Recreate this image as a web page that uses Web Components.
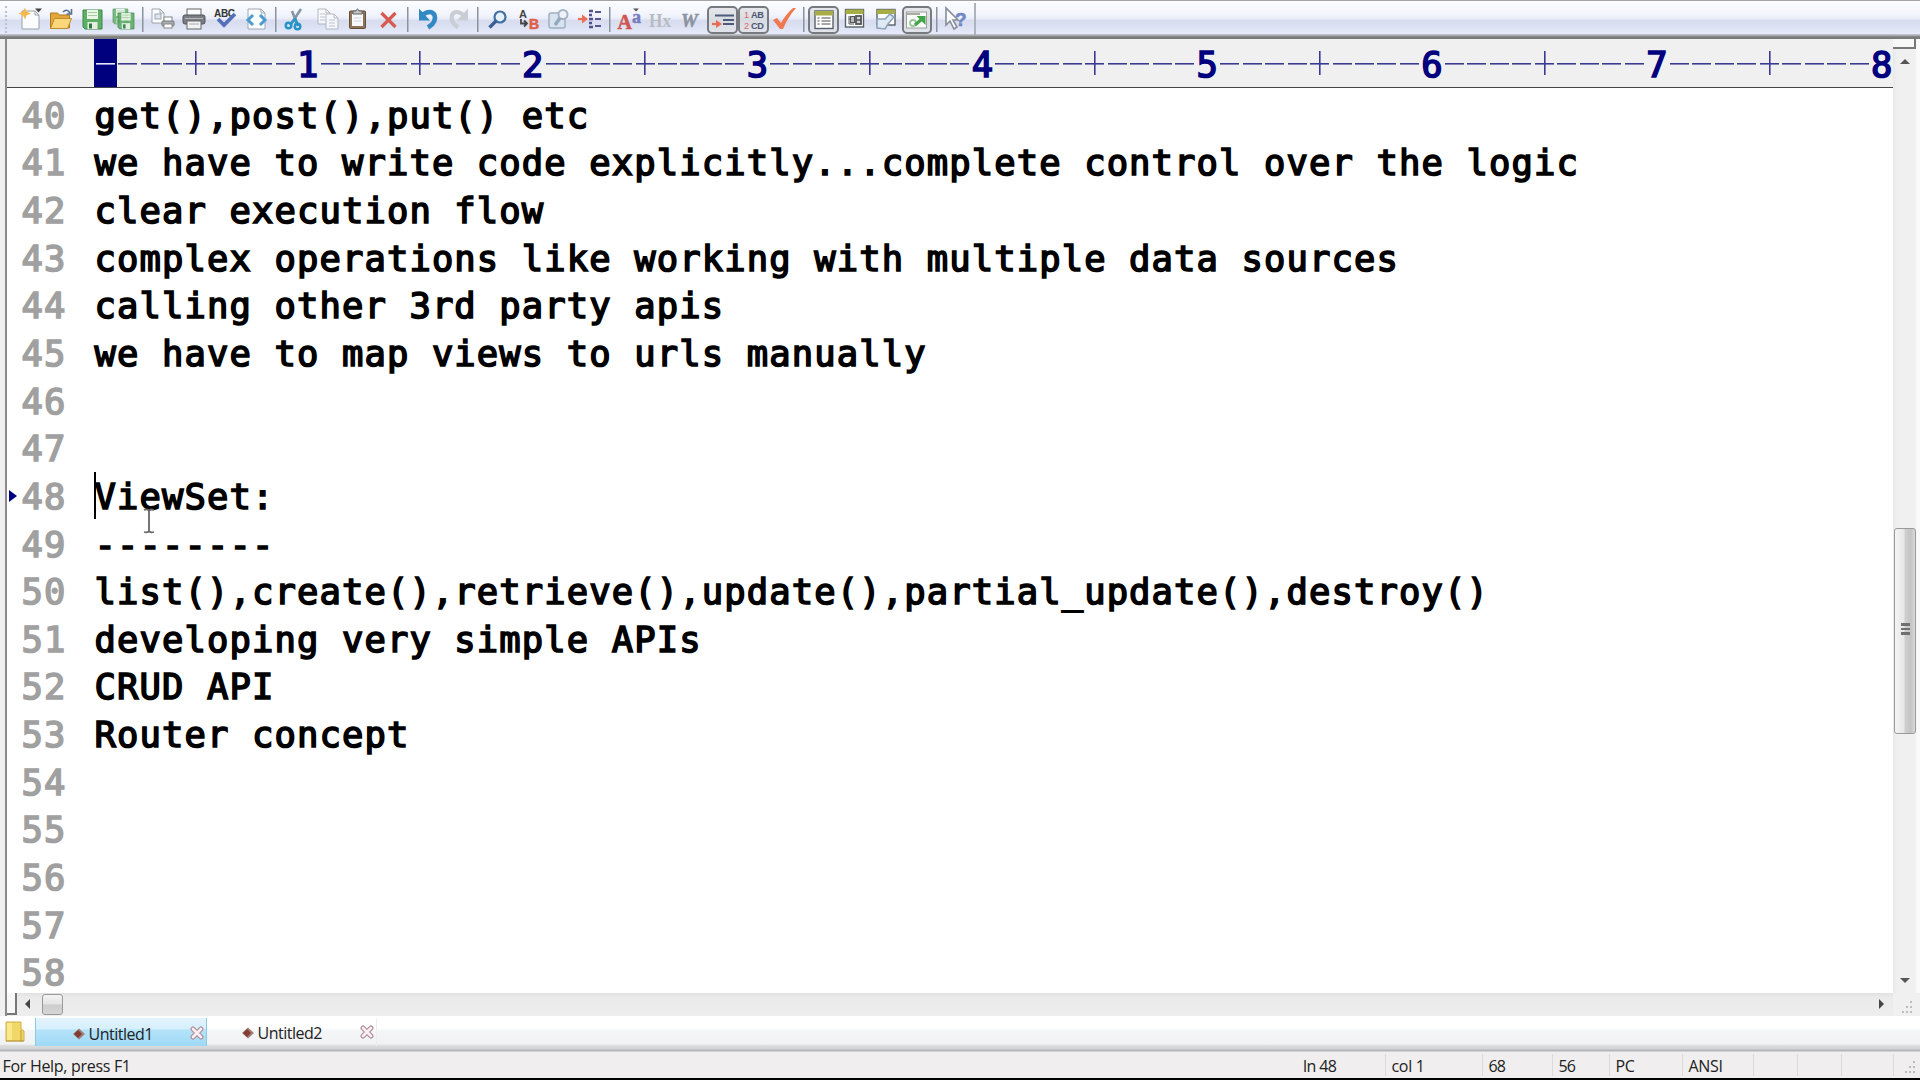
<!DOCTYPE html>
<html lang="en">
<head>
<meta charset="utf-8">
<title>Untitled1</title>
<style>
html,body{margin:0;height:100%;overflow:hidden;background:#f0f0f0}
</style>
</head>
<body>
<edit-app></edit-app>
<script>
const define = (name, html, setup) => customElements.define(name, class extends HTMLElement {
  constructor() {
    super();
    const t = document.createElement('template');
    t.innerHTML = typeof html === 'function' ? html(this) : html;
    this.attachShadow({mode: 'open'}).append(t.content.cloneNode(true));
    if (setup) setup(this);
  }
});

const page = (x, y, w = 14, h = 17, s = '#8a8f98') => `<path d="M${x} ${y}h${w - 4}l4 4v${h - 4}h-${w}z" fill="#fbfcfe" stroke="${s}"/><path d="M${x + w - 4} ${y}v4h4" fill="none" stroke="${s}"/>`;
const win = (x, y, w, h) => `<rect x="${x}" y="${y}" width="${w}" height="${h}" fill="#fff" stroke="#56606c" stroke-width="1.400"/><rect x="${x}" y="${y}" width="${w}" height="4.5" fill="#a9ad45"/>`;
const floppy = (x, y, s) => `<g transform="translate(${x} ${y}) scale(${s})"><path d="M0 0h19v19H2l-2-2z" fill="#5fae66" stroke="#3b8747"/><rect x="4" y="0" width="11" height="9" fill="#e9f6e6"/><path d="M5 2.500h9M5 5.500h9" stroke="#a7c9a4"/><rect x="4.500" y="12" width="10" height="7" fill="#e4efe2"/><rect x="6" y="13.500" width="3" height="5" fill="#2f7a3c"/></g>`;
const ICONS = {
  new: page(7, 6, 17, 18, '#9aa0a8') + '<path d="M20 3.500h7l-3.500 4z" fill="#444"/><path d="M10 2.500l1.500 4 4.500 2-4.500 2-1.500 4-2-4-4.500-2 4.500-2z" fill="#f8b84a"/>',
  open: '<path d="M4.500 23V8h7l2 2h10v13z" fill="#e2a63a" stroke="#b07a25"/><path d="M4.500 23.500l4-10h17l-4 10z" fill="#fbd77a" stroke="#c08c30"/><path d="M17 7q4-4 7 1M25.500 4v5h-5" fill="none" stroke="#55708e" stroke-width="1.600"/>',
  save: floppy(6, 5, 1),
  saveall: '<g opacity=".8">' + floppy(5, 4, .78) + '</g>' + '<g opacity=".9">' + floppy(10, 8, .84) + '</g>',
  preview: page(5, 4, 12, 14, '#a0a4ab') + '<rect x="8" y="9" width="6" height="5" fill="#dfe5ec" stroke="#9aa6b4"/><rect x="17" y="12" width="8" height="5" fill="#fff" stroke="#888"/><rect x="15" y="16" width="12" height="5" rx="1" fill="#a9adb4" stroke="#777"/><rect x="17" y="19" width="8" height="4" fill="#fff" stroke="#888"/>',
  print: '<rect x="9" y="4" width="14" height="8" fill="#fafafa" stroke="#666"/><rect x="5" y="10" width="22" height="9" rx="2" fill="#7a7e83" stroke="#505357"/><path d="M7 13.500h18" stroke="#b5b9be"/><rect x="9" y="16" width="14" height="8" fill="#f2f3f5" stroke="#666"/><path d="M11 19h10" stroke="#aaa"/>',
  spell: '<text x="4" y="11.500" font-family="Liberation Sans" font-weight="700" font-size="10" textLength="21" fill="#333">ABC</text><path d="M8 14l6 6L25 9" fill="none" stroke="#5470b8" stroke-width="3.800"/>',
  html: page(7, 4, 17, 20, '#a0a6b0') + '<path d="M12 10l-5 5 5 5M19 10l5 5-5 5" fill="none" stroke="#4a9bd0" stroke-width="3"/>',
  cut: '<path d="M22 4L12 19M13 6l5 13" stroke="#8496a6" stroke-width="2.600"/><path d="M16 14l-5 6M16 13l3 8" stroke="#2f97c9" stroke-width="2.600"/><circle cx="9.500" cy="20.500" r="2.800" fill="none" stroke="#2593c8" stroke-width="2.400"/><circle cx="18.500" cy="21.500" r="2.800" fill="none" stroke="#2593c8" stroke-width="2.400"/>',
  copy: '<g opacity=".8">' + page(7, 4, 12, 15, '#a6abb3') + page(15, 9, 12, 15, '#a6abb3') + '<path d="M9 9h5M9 12h5M9 15h5M18 15h6M18 18h6M18 21h6" stroke="#b5bbc4"/></g>',
  paste: '<rect x="7.500" y="6" width="16" height="17.500" rx="1" fill="#8d7358" stroke="#624d38"/><rect x="10" y="9" width="11" height="12" fill="#f7f8fa"/><path d="M11 9V6h3q1.500-4 3 0h3v3z" fill="#c1c4c7" stroke="#666"/><path d="M12 13h7M12 16h7" stroke="#d0d5dc"/>',
  del: '<path d="M8.500 8l14 14M22.500 8l-14 14" stroke="#d65a52" stroke-width="3.200"/>',
  undo: '<path d="M10 10q9-6 12.500 0 2.500 7-6.500 12.500" fill="none" stroke="#3089c3" stroke-width="4.600"/><path d="M7 3.500v12h11z" fill="#3089c3"/>',
  redo: '<path d="M21 10q-9-6-12 0-2 7 6 12.500" fill="none" stroke="#c9cdd4" stroke-width="4.200"/><path d="M25 3.500v12H14z" fill="#c9cdd4"/>',
  find: '<circle cx="18" cy="12" r="5.500" fill="#e5f0fb" stroke="#3f6fa5" stroke-width="2.200"/><path d="M14 16l-6.500 6.500" stroke="#3a5f92" stroke-width="3.400"/>',
  replace: '<text x="6" y="12.500" font-family="Liberation Sans" font-weight="700" font-size="11" fill="#444">A</text><text x="16" y="24" font-family="Liberation Sans" font-weight="700" font-size="14" fill="#e0604c" stroke="#e0604c" stroke-width=".6">B</text><path d="M8 14v4.500h5M11 15.500l3 3-3 3" fill="none" stroke="#444" stroke-width="1.800"/>',
  findfiles: '<rect x="5" y="8" width="16" height="15" rx="2" fill="#d8e3ee" stroke="#9db0c4" stroke-width="1.500"/><circle cx="19" cy="9.500" r="4.500" fill="#edf3f8" stroke="#a5b5c6" stroke-width="2"/><path d="M16 13l-5 7" stroke="#91a8bf" stroke-width="3.400"/>',
  goto: '<path d="M3 14h6" stroke="#ec6d56" stroke-width="2.200"/><path d="M7 9.500l6 4.500-6 4.500z" fill="#ec6d56"/><path d="M14 6h4M14 10h3M14 14h4M14 18h3M14 22h4" stroke="#4e538e" stroke-width="2.600"/><path d="M20 7h6M20 14h6M20 21h6" stroke="#535991" stroke-width="2"/>',
  font: '<text x="3.500" y="23.500" font-family="Liberation Serif" font-weight="700" font-size="20" fill="#cf5550" stroke="#cf5550" stroke-width=".5">A</text><text x="18" y="17.500" font-family="Liberation Serif" font-weight="700" font-size="18" fill="#777cc0" stroke="#777cc0" stroke-width=".5">a</text><path d="M19 3.500h6l-3 3z" fill="#555"/>',
  hx: '<text x="4" y="21.500" font-family="Liberation Serif" font-weight="700" font-size="18" textLength="22" lengthAdjust="spacingAndGlyphs" fill="#b8bcc2">Hx</text>',
  w: '<text x="5" y="21.500" font-family="Liberation Serif" font-style="italic" font-weight="700" font-size="19" fill="#8b93a0" stroke="#8b93a0" stroke-width=".5">W</text>',
  indent: '<path d="M8 10.500h19M16 15h11M16 19h11" stroke="#4c5a7c" stroke-width="2"/><path d="M5 19h5" stroke="#ea6b4f" stroke-width="2.200"/><path d="M9 15l6 4-6 4z" fill="#ea6b4f"/>',
  linenum: '<g font-family="Liberation Sans" font-size="9.2"><text x="6" y="13.300" fill="#db6a6a">1</text><text x="6" y="24" fill="#db6a6a">2</text><text x="13" y="13.300" font-weight="700" textLength="13" fill="#4b5673">AB</text><text x="13" y="24" font-weight="700" textLength="13" fill="#4b5673">CD</text></g>',
  check: '<path d="M4 15l4-2 4 5Q17 9 24 3l3 0q-8 9-13 21h-3z" fill="#f0784e"/>',
  list: win(7, 6, 18, 17.500) + '<path d="M9.500 13h2M9.500 16h2M9.500 19h2M13.500 13h9M13.500 16h9M13.500 19h9" stroke="#888" stroke-width="1.300"/>',
  tree: win(6.5, 4.500, 18, 17.500) + '<path d="M10 11v8h5M10 14h4" fill="none" stroke="#555"/><rect x="11.500" y="11.500" width="4" height="6" fill="#b7bcc4" stroke="#555"/><rect x="17" y="11" width="5" height="8" fill="#d0d4da" stroke="#555" stroke-width="1.800"/><path d="M17 15h5" stroke="#555" stroke-width="1.500"/>',
  browser: win(7, 4.500, 18, 15.500) + '<path d="M7 14h8l5-5 4 3-6 7-3 5-8-1z" fill="#dfe9f3" stroke="#8da3ba" stroke-width="1.600"/>',
  external: '<rect x="5.500" y="7" width="20" height="16" fill="#fafbfa" stroke="#9a9f9c"/><path d="M6 9h13" stroke="#a7ad9f" stroke-width="2"/><circle cx="12" cy="18" r="3" fill="#fff" stroke="#9bc59b" stroke-width="1.800"/><path d="M14 20l7-6" stroke="#42a548" stroke-width="3.200"/><path d="M15.500 11h9v9z" fill="#42a548"/>',
  help: '<path d="M6 3v17l4-4 4 8 3-2-4-7h5z" fill="#fbfcfe" stroke="#888e98" stroke-width="1.600"/><text x="15" y="21" font-family="Liberation Sans" font-weight="700" font-size="19" fill="#6f88c2" stroke="#6f88c2" stroke-width=".6">?</text>'
};

define('tool-icon', el => `<style>
:host{display:flex;flex:none;width:31.1px;height:30px;align-items:center;justify-content:center;position:relative}
:host([on])::before{content:"";position:absolute;inset:.5px .3px 1.500px;border:2px solid #777a7f;border-radius:5px;background:linear-gradient(#e6e7eb,#d9dbe2 50%,#e2e4ec);box-sizing:border-box}
svg{width:31px;height:30px;position:relative}
</style><svg viewBox="0 0 31 30">${ICONS[el.getAttribute('name')]}</svg>`);

const T = list => list.split(' ').map(n => n === '|' ? '<i></i>' : n[0] === '+' ? `<tool-icon on name="${n.slice(1)}"></tool-icon>` : `<tool-icon name="${n}"></tool-icon>`).join('');
define('tool-bar', `<style>
:host{display:flex;box-sizing:border-box;height:38.500px;border-top:1px solid #a3a3a8;padding:4px 0 0 15.1px;
background:linear-gradient(#fdfdff 0,#f2f4fc 14px,#e8ecf9 18px,#d8dcee 19px,#dbe1f2 25px,#e7ebfb 33px,#bfc1c8 33.500px,#a9abad 34.500px,#868887 35.500px,#777 37px);position:relative}
:host::before{content:"";position:absolute;left:5px;top:5px;height:27px;border-left:2px dotted #b9bfce}
i{flex:none;width:7.8px;height:27px;background:linear-gradient(#8d929d,#8d929d) 3px 2px/1.500px 25px no-repeat}
b{width:1.500px;height:32px;margin:-2px 0 0 3px;background:#aeb2bd}
</style>${T('new open save saveall | preview print spell html | cut copy paste del | undo redo | find replace findfiles goto | font hx w +indent +linenum check | +list tree browser +external | help')}<b></b>`);

const MONO = 'font-family:"DejaVu Sans Mono","Liberation Mono",monospace;font-size:35.5px;letter-spacing:1.119px;-webkit-text-stroke:1.600px currentColor;';
const cells = [...Array(80)].map((_, i) => {
  const k = i + 1;
  return k % 10 === 0 ? `<span class="n">${k / 10}</span>` : `<span class="${k === 1 ? 'cur' : k % 5 === 0 ? 't' : ''}"></span>`;
}).join('');
define('column-ruler', `<style>
:host{display:flex;box-sizing:border-box;height:49.500px;padding-left:87.2px;background:#f0f0f0;border-bottom:1.500px solid #444;color:#00007f;overflow:hidden}
span{flex:none;width:22.49px;height:48.500px;background:linear-gradient(#3a3a94,#3a3a94) 1.700px 24.500px/19px 1.600px no-repeat;box-sizing:border-box}
.t{background:linear-gradient(#3a3a94,#3a3a94) 1.700px 24.500px/19px 1.600px no-repeat,linear-gradient(#3a3a94,#3a3a94) 10.500px 12px/1.600px 24px no-repeat}
.cur{background:linear-gradient(#e8e8ff,#e8e8ff) 1.700px 24.500px/19px 1.600px no-repeat,#00007f}
.n{background:none;${MONO}letter-spacing:0;line-height:51.500px;text-align:center;display:flex;justify-content:center}
</style>${cells}`);

define('code-line', el => `<style>
:host{display:flex;flex:none;height:47.67px;line-height:47.67px;white-space:pre;${MONO}color:#000;position:relative}
.g{width:67px;flex:none;color:#a0a0a0;padding-left:14.5px;box-sizing:border-box;margin-right:20.5px}
.m{position:absolute;left:2px;top:17px;border-left:8px solid #00007f;border-top:6.500px solid transparent;border-bottom:6.500px solid transparent}
.c{position:absolute;left:87px;top:-1px;width:2px;height:47px;background:#000}
</style><span class="g">${el.getAttribute('n')}</span><span><slot></slot></span>${el.hasAttribute('current') ? '<div class="m"></div><div class="c"></div>' : ''}`);

const LINES = {40: 'get(),post(),put() etc', 41: 'we have to write code explicitly...complete control over the logic', 42: 'clear execution flow', 43: 'complex operations like working with multiple data sources', 44: 'calling other 3rd party apis', 45: 'we have to map views to urls manually', 48: 'ViewSet:', 49: '--------', 50: 'list(),create(),retrieve(),update(),partial_update(),destroy()', 51: 'developing very simple APIs', 52: 'CRUD API', 53: 'Router concept'};
let rows = '';
for (let n = 40; n <= 58; n++) rows += `<code-line n="${n}"${n === 48 ? ' current' : ''}>${LINES[n] || ''}</code-line>`;

define('text-area', `<style>
:host{display:flex;flex-direction:column;flex:1;min-height:0;background:#fff;padding-top:3.600px;overflow:hidden;position:relative}
svg{position:absolute;left:136px;top:420px}
</style>${rows}<svg width="12" height="26" viewBox="0 0 12 26"><path d="M1 2q4-1.500 5 1 1-2.500 5-1M6 3v20M1 24q4 1 5-1 1 2 5 1" fill="none" stroke="#666" stroke-width="1.800"/></svg>`);

define('v-scroll', `<style>
:host{display:flex;flex-direction:column;align-items:center;width:27px;flex:none;background:linear-gradient(90deg,#e8e8e8,#f0f0f0 4px,#f0f0f0 22px,#fafafa 24px)}
.split{width:21px;height:8px;border:solid #777;border-width:0 2px 2.500px 0;background:#f7f7f7;align-self:flex-start}
.up,.dn{border:5px solid transparent;margin-right:3px}
.up{border-bottom:5px solid #555;border-top:0;margin-top:10px}
.dn{border-top:5px solid #555;border-bottom:0;margin-bottom:10px}
.thumb{box-sizing:border-box;align-self:flex-start;width:22px;height:206px;margin-left:1px;border:1.500px solid #999;border-radius:3px;background:linear-gradient(90deg,#f4f4f4,#e7e7e7 45%,#cfcfcf 50%,#c4c4c4 80%,#dadada);display:flex;flex-direction:column;gap:2px;align-items:center;justify-content:center;padding-bottom:3px}
.thumb i{width:9px;height:2.500px;background:#707070}
.a{height:464px;flex:none}.b{flex:1}
</style><div class="split"></div><div class="up"></div><div class="a"></div><div class="thumb"><i></i><i></i><i></i></div><div class="b"></div><div class="dn"></div>`);

define('h-scroll', `<style>
:host{display:flex;align-items:center;height:23px;flex:none;background:linear-gradient(#e2e2e2,#ebebeb 5px,#ededed)}
.split{width:8px;height:20px;border:solid #777;border-width:0 2.500px 2px 0;background:#f7f7f7;align-self:flex-start}
.l,.r{border:5px solid transparent;margin-bottom:2px}
.l{border-right:5px solid #444;border-left:0;margin-left:8px}
.r{border-left:5px solid #444;border-right:0;margin-left:auto;margin-right:9px}
.thumb{box-sizing:border-box;width:21px;height:21px;margin-left:11.500px;margin-bottom:1px;border:1.500px solid #999;border-radius:3px;background:linear-gradient(#f4f4f4,#e4e4e4 48%,#cdcdcd 52%,#d6d6d6)}
svg{width:27px;height:23px;background:#f0f0f0}
</style><div class="split"></div><div class="l"></div><div class="thumb"></div><div class="r"></div>
<svg viewBox="0 0 27 23"><path d="M17 9h2M13 14h2M17 14h2M9 19h2M13 19h2M17 19h2" stroke="#bdbdbd" stroke-width="2"/></svg>`);

define('doc-tab', `<style>
:host{display:flex;align-items:center;box-sizing:border-box;width:172px;height:28px;flex:none;padding:2px 2px 0 37px;font:16px "Open Sans",sans-serif;letter-spacing:-.5px;color:#222;border-right:1px solid #eee}
:host([active]){padding-top:4px;background:linear-gradient(#e3f4fd 0,#d5effc 11px,#b4e3f9 12px,#9fd9f6);border:1px solid #8cc7e4;border-width:0 1.500px}
.d{width:12px;height:12px;margin-right:4px}
.x{width:14px;height:14px;margin-left:auto;margin-bottom:2px}
</style><svg class="d" viewBox="0 0 12 12"><path d="M6 .5L12 6l-6 5.500L0 6z" fill="#9d8078"/><path d="M5 2l4 4-4 4-4-4z" fill="#843b32"/></svg><slot></slot>
<svg class="x" viewBox="0 0 14 14"><path d="M3 3l8 8M11 3l-8 8" stroke="#b08f9b" stroke-width="5" stroke-linecap="round"/><path d="M3 3l8 8M11 3l-8 8" stroke="#fbeff2" stroke-width="2.600" stroke-linecap="round"/></svg>`);

define('tab-strip', `<style>
:host{display:flex;height:36px;flex:none;background:linear-gradient(#fff 0,#fff 12px,#f4f5f6 15px,#f1f2f3 28px,#d9dadc 30px,#d3d4d6 33px,#b4b5b8 34px,#b4b5b8 35px,#eee 36px);padding-top:2px;box-sizing:border-box}
.f{width:34.500px;flex:none}
.f svg{display:block;margin:3px 0 0 4px}
doc-tab+doc-tab{margin-left:-2px}
</style><div class="f"><svg width="22" height="22" viewBox="0 0 22 22"><path d="M2 1h15v7l3 2v10H2z" fill="#f1d765" stroke="#cfae4a"/><path d="M17 9v11M2 20h18" stroke="#b89a45"/><path d="M3 2h5v17H3z" fill="#f9e98d"/></svg></div><doc-tab active>Untitled1</doc-tab><doc-tab>Untitled2</doc-tab>`);

define('status-bar', `<style>
:host{display:flex;height:28px;flex:none;box-sizing:border-box;background:#f0eeee;border-bottom:2px solid #000;font:16px/26px "Open Sans",sans-serif;letter-spacing:-.3px;color:#222}
.m{flex:1;padding:1px 0 0 2.500px}
span{box-sizing:border-box;flex:none;padding-left:5.500px;border-left:1.500px solid #dcdada;margin:2px 0;line-height:24px}
span.f{border:0}
</style><div class="m">For Help, press F1</div><span class="f" style="width:87.500px;letter-spacing:-.6px">ln 48</span><span style="width:97px">col 1</span><span style="width:70px;letter-spacing:-.8px">68</span><span style="width:57px;letter-spacing:-.8px">56</span><span style="width:73px">PC</span><span style="width:71px">ANSI</span><span style="width:44px"></span><span style="width:44px"></span><span style="width:52px"></span><span style="width:27px;padding:0"><svg width="25" height="22" viewBox="0 0 25 22"><path d="M19 8h2M15 13h2M19 13h2M11 18h2M15 18h2M19 18h2" stroke="#bbb" stroke-width="2"/></svg></span>`);

define('edit-app', `<style>
:host{display:flex;flex-direction:column;width:1920px;height:1080px;background:#f0f0f0}
.frame{display:flex;flex-direction:column;flex:1;min-height:0;margin-left:5px;border-left:2.500px solid #8a8a8a}
.body{display:flex;flex:1;min-height:0}
.col{display:flex;flex-direction:column;flex:1;min-width:0}
</style><tool-bar></tool-bar><div class="frame"><div class="body"><div class="col"><column-ruler></column-ruler><text-area></text-area></div><v-scroll></v-scroll></div><h-scroll></h-scroll></div><tab-strip></tab-strip><status-bar></status-bar>`);
</script>
</body>
</html>
